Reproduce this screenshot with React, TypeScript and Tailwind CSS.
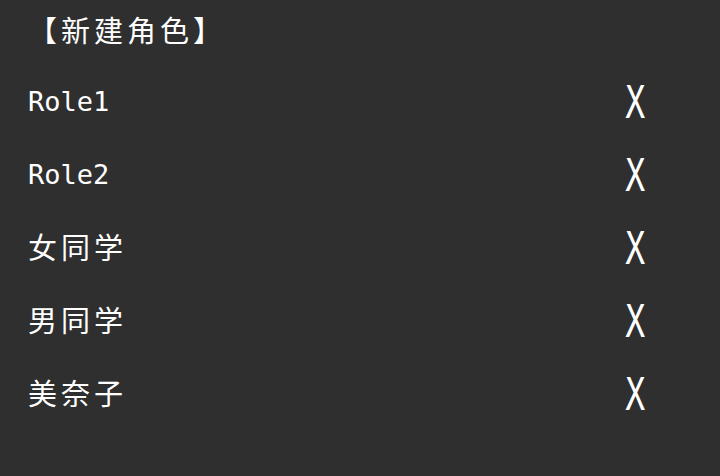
import React from 'react';

const roles = ['Role1', 'Role2', '女同学', '男同学', '美奈子'];

const isLatin = (s: string) => /^[\x00-\x7f]+$/.test(s);

export default function App() {
  return (
    <div className="w-[720px] h-[476px] bg-[#2f2f2f] text-white pl-[28px] overflow-hidden">
      {/* Title */}
      <div className="h-[58px] flex items-center">
        <span className="text-[29px] tracking-[4px] leading-none font-['Noto_Sans_CJK_SC',sans-serif]">
          【新建角色】
        </span>
      </div>

      {/* Role list */}
      <div className="mt-[8px] flex flex-col">
        {roles.map(r => (
          <div key={r} className="h-[73px] flex items-center">
            <div className="w-[587px]">
              {isLatin(r) ? (
                <span className="text-[27px] leading-none font-['DejaVu_Sans_Mono',monospace]">
                  {r}
                </span>
              ) : (
                <span className="text-[29px] tracking-[4px] leading-none font-['Noto_Sans_CJK_SC',sans-serif]">
                  {r}
                </span>
              )}
            </div>
            <div className="w-[40px] flex justify-center">
              <span className="text-[44px] leading-none scale-x-[0.75] font-['DejaVu_Sans_Mono',monospace]">
                X
              </span>
            </div>
          </div>
        ))}
      </div>
    </div>
  );
}
